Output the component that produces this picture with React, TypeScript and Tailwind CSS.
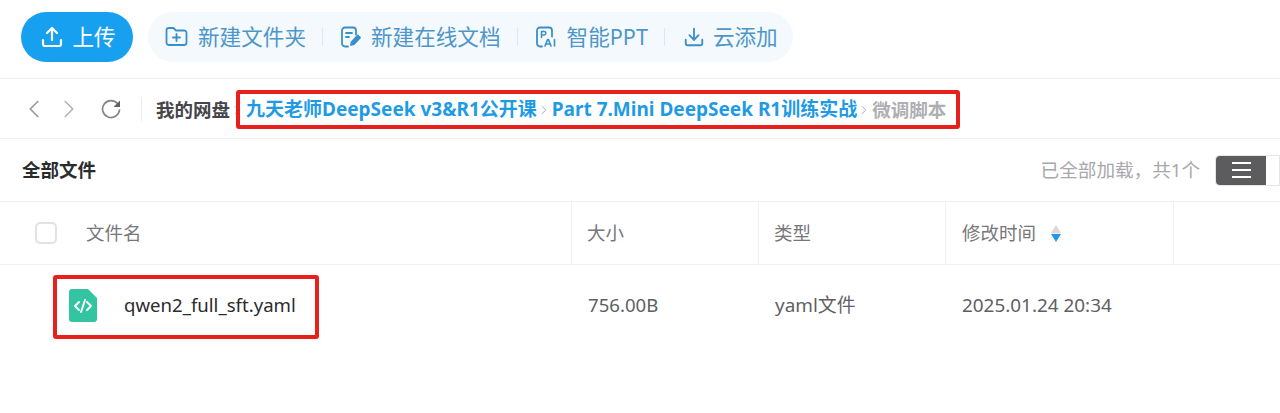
import { ChevronLeft, ChevronRight, Upload, Download } from "lucide-react";

const font = "font-['Noto_Sans','Noto_Sans_CJK_SC',sans-serif]";

function Sep() {
  return <span className="ml-[16px] mr-[18px] h-[18px] w-px bg-[#dbe8f2]" />;
}

function FolderIcon() {
  return (
    <svg width="23" height="21" viewBox="0 0 23 21" fill="none" stroke="#3b8fc8" strokeWidth="1.8" strokeLinecap="round" strokeLinejoin="round">
      <path d="M1.5 4.5a2.5 2.5 0 0 1 2.5-2.5h4.5l2.5 2.5h8a2.5 2.5 0 0 1 2.5 2.5v9.5a2.5 2.5 0 0 1-2.5 2.5H4a2.5 2.5 0 0 1-2.5-2.5z" />
      <path d="M11.5 8v7M8 11.5h7" />
    </svg>
  );
}

function DocIcon() {
  return (
    <svg width="20" height="22" viewBox="0 0 20 22" fill="none" stroke="#3b8fc8" strokeWidth="1.8" strokeLinecap="round" strokeLinejoin="round">
      <path d="M7 20.5H4a3 3 0 0 1-3-3v-13a3 3 0 0 1 3-3h8a3 3 0 0 1 3 3v4" />
      <path d="M5 7h6M5 11h3" />
      <path d="M10 19l.6-3 6-6.5 2.4 2.2-6 6.5z" fill="#3b8fc8" />
    </svg>
  );
}

function PptIcon() {
  return (
    <svg width="21" height="22" viewBox="0 0 21 22" fill="none" stroke="#3b8fc8" strokeLinecap="round" strokeLinejoin="round">
      <path d="M6 20.5H4a3 3 0 0 1-3-3v-13a3 3 0 0 1 3-3h9a3 3 0 0 1 3 3v6" strokeWidth="1.8" />
      <path d="M5.5 11.5V5.5h2.6a1.7 1.7 0 0 1 0 3.5H5.5" strokeWidth="1.5" />
      <path d="M9 20l2.6-6.5h.8L15 20M10 18h4.2M18.5 13.5V20" strokeWidth="1.6" />
    </svg>
  );
}

export default function App() {
  return (
    <div className={`relative h-[413px] w-[1280px] overflow-hidden bg-white ${font}`}>
      {/* toolbar */}
      <div className="flex h-[79px] items-center border-b border-[#f0f0f2] pb-[4px] pl-[21px]">
        <button className="flex h-[50px] w-[112px] items-center justify-center gap-[8px] rounded-full bg-[#18a0f0] pl-[2px] text-[21.5px] text-white">
          <Upload size={24} strokeWidth={2.2} />
          上传
        </button>
        <div className="ml-[15px] flex h-[50px] items-center rounded-full bg-[#f3f9fd] pl-[17px] pr-[15px] text-[21.6px] text-[#4f96c8]">
          <span className="flex items-center gap-[10px]">
            <FolderIcon />
            新建文件夹
          </span>
          <Sep />
          <span className="flex items-center gap-[10px]">
            <DocIcon />
            新建在线文档
          </span>
          <Sep />
          <span className="flex items-center gap-[10px]">
            <PptIcon />
            智能PPT
          </span>
          <Sep />
          <span className="flex items-center gap-[8px]">
            <Download size={22} strokeWidth={2} className="text-[#3b8fc8]" />
            云添加
          </span>
        </div>
      </div>

      {/* breadcrumb */}
      <div className="flex h-[60px] items-center border-b border-[#f0f0f2] pl-[19px]">
        <ChevronLeft size={30} strokeWidth={1.4} className="text-[#9a9a9e]" />
        <ChevronRight size={30} strokeWidth={1.4} className="ml-[5px] text-[#b5b5b8]" />
        <svg width="20" height="20" viewBox="0 0 20 20" fill="none" className="ml-[17px]">
          <path d="M16.5 4.5A8.5 8.5 0 1 0 18.5 11" stroke="#85858a" strokeWidth="1.7" strokeLinecap="round" />
          <path d="M19 1.5v6.5h-6.5z" fill="#606065" />
        </svg>
        <span className="ml-[20px] mr-[14px] h-[24px] w-px bg-[#ececee]" />
        <div className="flex items-center pt-[2px] text-[19px] font-bold text-[#1f9be6]">
          <span className="text-[18.5px] text-[#45454a]">我的网盘</span>
          <ChevronRight size={14} strokeWidth={1.6} className="text-[#a8a8ac]" />
          <span className="ml-[2px]">九天老师DeepSeek v3&amp;R1公开课</span>
          <ChevronRight size={14} strokeWidth={1.6} className="text-[#a8a8ac]" />
          <span className="ml-[1px]">Part 7.Mini DeepSeek R1训练实战</span>
          <ChevronRight size={14} strokeWidth={1.6} className="text-[#a8a8ac]" />
          <span className="ml-[1px] text-[18.5px] text-[#afafb3]">微调脚本</span>
        </div>
      </div>

      {/* title row */}
      <div className="flex h-[63px] items-center justify-between border-b border-[#f0f0f2] pl-[22px]">
        <span className="text-[18.5px] font-bold text-[#2b2b2e]">全部文件</span>
        <div className="flex items-center">
          <span className="mr-[15px] text-[18.6px] text-[#a8a8ac]">已全部加载，共1个</span>
          <div className="flex h-[31px] w-[65px] rounded-l-[4px] border border-[#e6e6e8]">
            <div className="flex w-[50px] items-center justify-center rounded-l-[4px] bg-[#5c5c5e]">
              <div className="flex flex-col gap-[5px]">
                <span className="h-[2px] w-[19px] bg-white" />
                <span className="h-[2px] w-[19px] bg-white" />
                <span className="h-[2px] w-[19px] bg-white" />
              </div>
            </div>
          </div>
        </div>
      </div>

      {/* table header */}
      <div className="flex h-[63px] items-stretch border-b border-[#f0f0f2] text-[18.5px] text-[#77777b]">
        <div className="flex w-[572px] items-center border-r border-[#f0f0f2] pl-[35px]">
          <span className="h-[22px] w-[22px] rounded-[5px] border-2 border-[#e2e2e4]" />
          <span className="ml-[29px]">文件名</span>
        </div>
        <div className="flex w-[187px] items-center border-r border-[#f0f0f2] pl-[15px]">大小</div>
        <div className="flex w-[187px] items-center border-r border-[#f0f0f2] pl-[15px]">类型</div>
        <div className="flex w-[228px] items-center gap-[15px] border-r border-[#f0f0f2] pl-[16px]">
          修改时间
          <span className="flex flex-col gap-[1px]">
            <span className="h-0 w-0 border-x-[5.5px] border-b-[8px] border-x-transparent border-b-[#e3d3da]" />
            <span className="h-0 w-0 border-x-[5.5px] border-t-[8px] border-x-transparent border-t-[#1f9be6]" />
          </span>
        </div>
      </div>

      {/* file row */}
      <div className="flex h-[80px] items-center text-[18.6px] text-[#5f5f63]">
        <div className="flex w-[572px] items-center pl-[69px]">
          <svg width="28" height="33" viewBox="0 0 28 33">
            <path d="M3 0h16l9 9v21a3 3 0 0 1-3 3H3a3 3 0 0 1-3-3V3a3 3 0 0 1 3-3z" fill="#33c4a2" />
            <path d="M10 13l-4 4 4 4M18 13l4 4-4 4M16 11l-4 12" fill="none" stroke="#fff" strokeWidth="1.9" strokeLinecap="round" strokeLinejoin="round" />
          </svg>
          <span className="ml-[27px] text-[#2b2b2e]">qwen2_full_sft.yaml</span>
        </div>
        <div className="w-[187px] pl-[16px]">756.00B</div>
        <div className="w-[187px] pl-[16px] text-[18.9px]">yaml文件</div>
        <div className="pl-[16px] text-[18.9px]">2025.01.24 20:34</div>
      </div>

      {/* red annotation boxes */}
      <div className="absolute left-[236px] top-[90px] h-[39px] w-[724px] rounded-[3px] border-[4px] border-[#e8201c]" />
      <div className="absolute left-[53px] top-[275px] h-[64px] w-[266px] rounded-[3px] border-[4px] border-[#e8201c]" />
    </div>
  );
}
